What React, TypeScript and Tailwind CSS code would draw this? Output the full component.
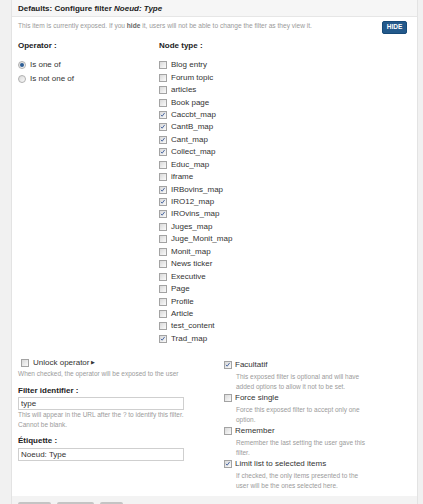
import React from 'react';

const nodeTypes: { label: string; checked?: boolean }[] = [
  { label: 'Blog entry' },
  { label: 'Forum topic' },
  { label: 'articles' },
  { label: 'Book page' },
  { label: 'Caccbt_map', checked: true },
  { label: 'CantB_map', checked: true },
  { label: 'Cant_map', checked: true },
  { label: 'Collect_map', checked: true },
  { label: 'Educ_map' },
  { label: 'iframe' },
  { label: 'IRBovins_map', checked: true },
  { label: 'IRO12_map', checked: true },
  { label: 'IROvins_map', checked: true },
  { label: 'Juges_map' },
  { label: 'Juge_Monit_map' },
  { label: 'Monit_map' },
  { label: 'News ticker' },
  { label: 'Executive' },
  { label: 'Page' },
  { label: 'Profile' },
  { label: 'Article' },
  { label: 'test_content' },
  { label: 'Trad_map', checked: true },
];

const exposedOptions = [
  {
    label: 'Facultatif',
    checked: true,
    help: ['This exposed filter is optional and will have', 'added options to allow it not to be set.'],
  },
  {
    label: 'Force single',
    help: ['Force this exposed filter to accept only one', 'option.'],
  },
  {
    label: 'Remember',
    help: ['Remember the last setting the user gave this', 'filter.'],
  },
  {
    label: 'Limit list to selected items',
    checked: true,
    help: ['If checked, the only items presented to the', 'user will be the ones selected here.'],
  },
];

const Checkbox: React.FC<{ checked?: boolean }> = ({ checked }) => (
  <span className="relative inline-block w-[8px] h-[8px] shrink-0 border border-[#a3a3a3] bg-linear-to-br from-[#d9d9d9] to-[#fbfbfb]">
    {checked && (
      <svg viewBox="0 0 8 8" className="absolute left-0 top-0 w-[6px] h-[6px]">
        <path d="M1.2 3.8 L2.9 5.6 L6.2 1.2" fill="none" stroke="#3b5b9a" strokeWidth="1.2" />
      </svg>
    )}
  </span>
);

const Radio: React.FC<{ selected?: boolean }> = ({ selected }) => (
  <span className="flex items-center justify-center w-[8px] h-[8px] shrink-0 rounded-full border border-[#b0b0b0] bg-linear-to-br from-[#dadada] to-[#fafafa]">
    {selected && <span className="w-[4px] h-[4px] rounded-full bg-[#2c5d94]" />}
  </span>
);

export default function App() {
  return (
    <div
      className="w-[423px] h-[504px] overflow-hidden bg-[#f1f1f1] pl-[11px] pr-[5px] text-[#333]"
      style={{ fontFamily: '"Liberation Sans", Arial, sans-serif' }}
    >
      <div className="h-full bg-white border-x border-[#e3e3e3] flex flex-col">
        {/* Header */}
        <div className="h-[17px] shrink-0 bg-[#f6f6f6] border-b border-[#e6e6e6] pl-[6px] pt-[1px] text-[8px] leading-[15px] font-bold text-[#222]">
          Defaults: Configure filter <em>Noeud: Type</em>
        </div>

        <div className="flex-1 pl-[6px] pr-[10px]">
          {/* Exposed notice */}
          <div className="mt-[4px] h-[13px] flex items-start justify-between">
            <p className="text-[6.6px] leading-[10px] text-[#9a9a9a]">
              This item is currently exposed. If you <b className="text-[#666]">hide</b> it, users will not be able to
              change the filter as they view it.
            </p>
            <button className="w-[25px] h-[13px] rounded-[2px] bg-[#23598b] border border-[#174a78] text-white text-[6.5px] font-bold leading-none">
              HIDE
            </button>
          </div>

          {/* Operator / Node type */}
          <div className="mt-[6px] flex">
            <div className="w-[141px] shrink-0">
              <div className="h-[12px] text-[8px] leading-[12px] font-bold text-[#222]">Operator :</div>
              <div className="mt-[6px]">
                <label className="h-[14px] flex items-center gap-[4px] text-[8px]">
                  <Radio selected />
                  <span>Is one of</span>
                </label>
                <label className="h-[14px] flex items-center gap-[4px] text-[8px]">
                  <Radio />
                  <span>Is not one of</span>
                </label>
              </div>
            </div>
            <div>
              <div className="h-[12px] text-[8px] leading-[12px] font-bold text-[#222]">Node type :</div>
              <div className="mt-[7px]">
                {nodeTypes.map((t) => (
                  <label key={t.label} className="h-[12.45px] flex items-center gap-[4px] text-[8px]">
                    <Checkbox checked={t.checked} />
                    <span>{t.label}</span>
                  </label>
                ))}
              </div>
            </div>
          </div>

          {/* Lower settings */}
          <div className="mt-[12px] flex items-start">
            <div className="w-[166px] shrink-0">
              <label className="h-[12px] pl-[3px] flex items-center gap-[4px] text-[8px]">
                <Checkbox />
                <span>Unlock operator</span>
                <span className="text-[5px] text-[#333] -ml-[2px]">▶</span>
              </label>
              <div className="text-[6.5px] leading-[10px] text-[#9a9a9a]">
                When checked, the operator will be exposed to the user
              </div>

              <div className="mt-[6px] h-[12px] text-[8px] leading-[12px] font-bold text-[#222]">Filter identifier :</div>
              <input
                readOnly
                value="type"
                className="block w-[166px] h-[13px] border border-[#cfcfcf] px-[2px] text-[8px] text-[#333] outline-none"
              />
              <div className="text-[6.5px] leading-[10px] text-[#9a9a9a]">
                This will appear in the URL after the ? to identify this filter.
                <br />
                Cannot be blank.
              </div>

              <div className="mt-[5px] h-[12px] text-[8px] leading-[12px] font-bold text-[#222]">Étiquette :</div>
              <input
                readOnly
                value="Noeud: Type"
                className="mt-[1px] block w-[166px] h-[13px] border border-[#cfcfcf] px-[2px] text-[8px] text-[#333] outline-none"
              />
            </div>

            <div className="ml-[37px] mt-[2px]">
              {exposedOptions.map((o) => (
                <div key={o.label} className="h-[33px]">
                  <label className="h-[12px] pl-[3px] flex items-center gap-[3px] text-[8px]">
                    <Checkbox checked={o.checked} />
                    <span>{o.label}</span>
                  </label>
                  <div className="mt-[1px] pl-[15px] text-[6.5px] leading-[10px] text-[#9a9a9a]">
                    {o.help.map((h) => (
                      <div key={h}>{h}</div>
                    ))}
                  </div>
                </div>
              ))}
            </div>
          </div>
        </div>

        {/* Footer */}
        <div className="h-[8px] shrink-0 bg-[#f3f3f3] pl-[6px] pt-[6px] flex items-start gap-[6px]">
          <div className="w-[33px] h-[6px] rounded-t-[2px] bg-[#c4c4c4]" />
          <div className="w-[37px] h-[6px] rounded-t-[2px] bg-[#c4c4c4]" />
          <div className="w-[23px] h-[6px] rounded-t-[2px] bg-[#c4c4c4]" />
        </div>
      </div>
    </div>
  );
}
